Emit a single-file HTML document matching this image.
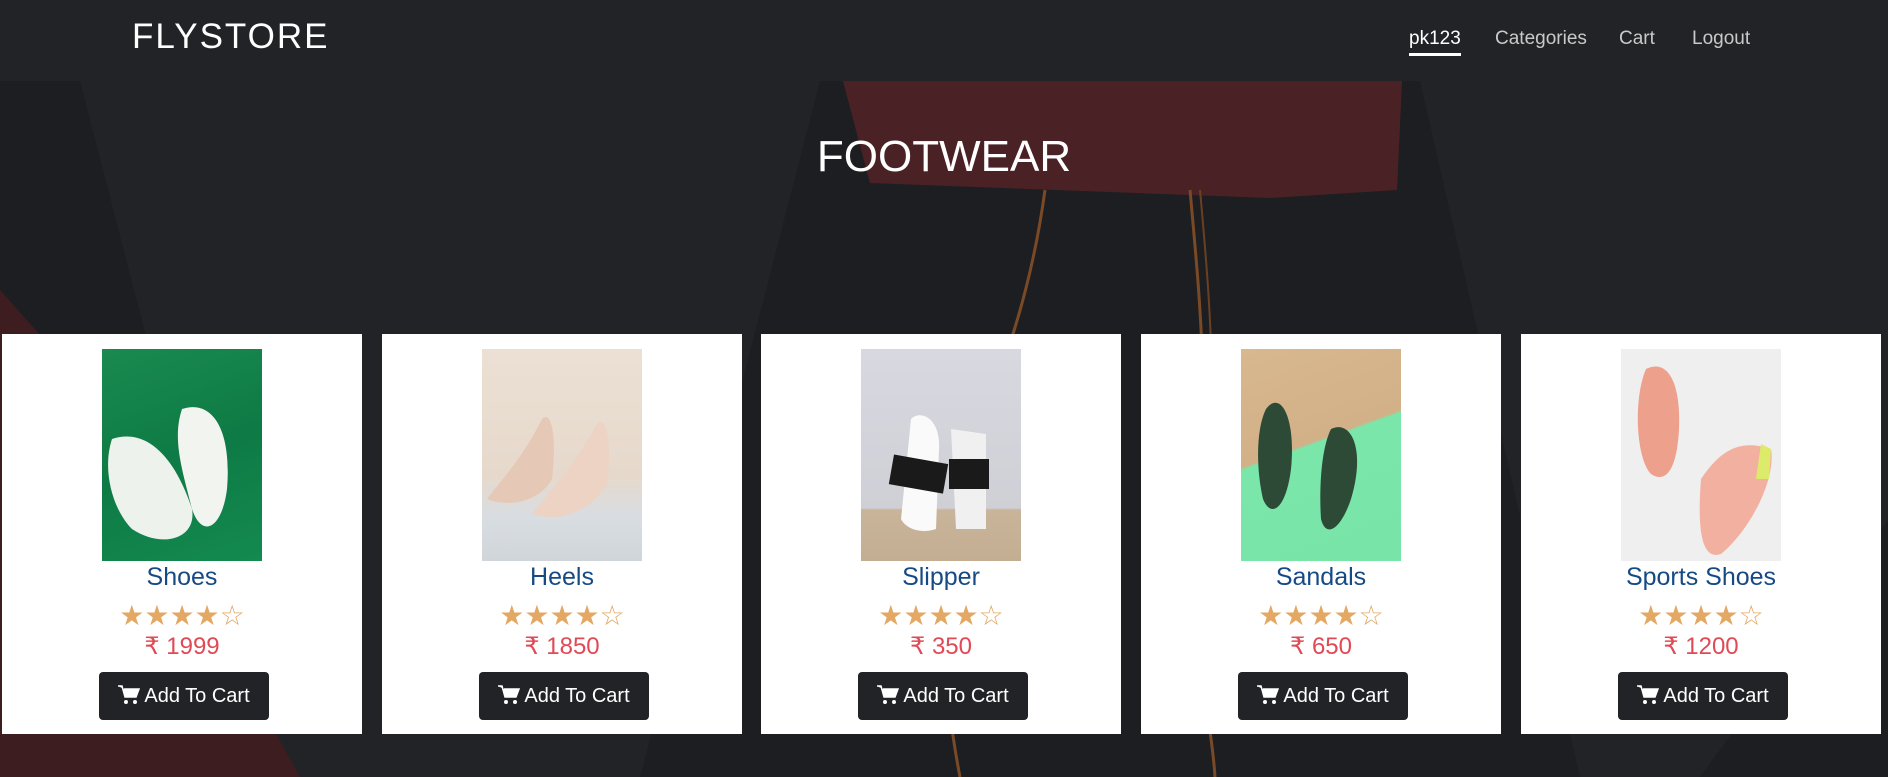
<!DOCTYPE html>
<html><head><meta charset="utf-8"><style>
*{margin:0;padding:0;box-sizing:border-box}
body{width:1888px;height:777px;overflow:hidden;background:#1c1d21;font-family:"Liberation Sans",sans-serif;position:relative}
.bg{position:absolute;left:0;top:0}
nav{position:absolute;left:0;top:0;width:1888px;height:81px;background:#212327}
.brand{position:absolute;left:132px;top:17px;color:#fff;font-size:35px;letter-spacing:2px;font-weight:300}
.nl{position:absolute;top:28px;color:#c9c9c9;font-size:19px}
.nl.act{color:#fff;border-bottom:3px solid #fff;padding-bottom:3px}
h1{position:absolute;left:0;width:1888px;top:132px;text-align:center;color:#fff;font-weight:400;font-size:44px}
.card{position:absolute;top:334px;width:360px;height:400px;background:#fff;text-align:center}
.img{position:absolute;left:100px;top:15px;width:160px;height:212px}
.t{position:absolute;left:0;width:360px;top:229px;font-size:25px;color:#164a85}
.s{position:absolute;left:0;width:360px;top:265px;font-size:28px;color:#e2a864;letter-spacing:0px}
.p{position:absolute;left:0;width:360px;top:298px;font-size:24px;color:#e04a55}
.b{position:absolute;left:97px;top:338px;width:170px;height:48px;background:#212327;border-radius:4px;color:#fff;font-size:20px;line-height:48px}
.b svg{vertical-align:-3px;margin-right:4px}
</style></head><body>
<svg class="bg" width="1888" height="777">
<rect width="1888" height="777" fill="#1d1e22"/>
<polygon points="80,81 820,81 640,777 260,777" fill="#222327"/>
<polygon points="1420,81 1888,81 1888,520 1700,777 1580,777" fill="#222327"/>
<polygon points="0,290 80,380 300,777 0,777" fill="#3e1d20"/>
<polygon points="843,81 1402,81 1397,190 1270,198 870,183" fill="#4a2225"/>
<path d="M1045,190 C1030,300 1000,380 960,470 C930,560 945,700 960,777" stroke="#7a4a26" stroke-width="3" fill="none"/>
<path d="M1190,190 C1200,300 1210,400 1195,500 C1180,600 1210,700 1215,777" stroke="#7a4a26" stroke-width="3" fill="none"/>
<path d="M1200,190 C1210,300 1218,400 1205,500" stroke="#6a4022" stroke-width="2" fill="none"/>
</svg>
<nav><div class="brand">FLYSTORE</div>
<span class="nl act" style="left:1409px">pk123</span>
<span class="nl" style="left:1495px">Categories</span>
<span class="nl" style="left:1619px">Cart</span>
<span class="nl" style="left:1692px">Logout</span></nav>
<h1>FOOTWEAR</h1>

<div class="card" style="left:2px"><div class="img" style="background:linear-gradient(160deg,#1a8a50 0%,#0e7a45 50%,#138a50 100%)"><svg width="160" height="212"><path d="M10,90 C40,80 70,100 90,160 C95,190 60,200 30,180 C10,160 0,120 10,90Z" fill="#eef2ec"/><path d="M80,60 C110,50 130,80 125,140 C120,180 100,190 90,160 C80,120 70,90 80,60Z" fill="#f2f4f0"/></svg></div>
<div class="t">Shoes</div><div class="s">★★★★☆</div><div class="p">₹ 1999</div>
<div class="b"><svg width="22" height="20" viewBox="0 0 22 20"><path d="M0,1h4l3,11h11l3-8H6" fill="#fff" stroke="#fff" stroke-width="1.5"/><circle cx="8" cy="17" r="2" fill="#fff"/><circle cx="17" cy="17" r="2" fill="#fff"/></svg>Add To Cart</div></div>

<div class="card" style="left:382px"><div class="img" style="background:linear-gradient(180deg,#ece0d4 0%,#e6d9cc 60%,#d8dde2 80%,#d0d5da 100%)"><svg width="160" height="212"><path d="M5,150 C20,130 40,110 60,70 C70,60 75,90 70,130 C60,150 30,160 5,150Z" fill="#e5c9b6"/><path d="M50,165 C70,140 90,120 115,75 C125,65 130,95 125,135 C110,160 80,175 50,165Z" fill="#ecd3c3"/></svg></div>
<div class="t">Heels</div><div class="s">★★★★☆</div><div class="p">₹ 1850</div>
<div class="b"><svg width="22" height="20" viewBox="0 0 22 20"><path d="M0,1h4l3,11h11l3-8H6" fill="#fff" stroke="#fff" stroke-width="1.5"/><circle cx="8" cy="17" r="2" fill="#fff"/><circle cx="17" cy="17" r="2" fill="#fff"/></svg>Add To Cart</div></div>

<div class="card" style="left:761px"><div class="img" style="background:linear-gradient(180deg,#d8d8e0 0%,#cfcfd6 75%,#c8b49a 76%,#c4ae92 100%)"><svg width="160" height="212"><path d="M50,70 C60,60 80,70 78,100 L75,180 C60,185 45,180 40,170 Z" fill="#fafafa"/><rect x="30" y="110" width="55" height="30" fill="#1a1a1a" transform="rotate(10 57 125)"/><path d="M90,80 L125,85 L125,180 L95,180Z" fill="#f0f0f0"/><rect x="88" y="110" width="40" height="30" fill="#1a1a1a"/></svg></div>
<div class="t">Slipper</div><div class="s">★★★★☆</div><div class="p">₹ 350</div>
<div class="b"><svg width="22" height="20" viewBox="0 0 22 20"><path d="M0,1h4l3,11h11l3-8H6" fill="#fff" stroke="#fff" stroke-width="1.5"/><circle cx="8" cy="17" r="2" fill="#fff"/><circle cx="17" cy="17" r="2" fill="#fff"/></svg>Add To Cart</div></div>

<div class="card" style="left:1141px"><div class="img" style="background:linear-gradient(160deg,#d8b88e 0%,#d2b088 44%,#7ae6aa 45%,#78e4a8 100%)"><svg width="160" height="212"><path d="M25,60 C40,40 55,70 50,120 C45,160 30,170 22,150 C15,120 15,80 25,60Z" fill="#2c4a36"/><path d="M90,80 C110,70 125,100 110,150 C100,180 85,190 80,170 C78,140 80,100 90,80Z" fill="#2c4a36"/></svg></div>
<div class="t">Sandals</div><div class="s">★★★★☆</div><div class="p">₹ 650</div>
<div class="b"><svg width="22" height="20" viewBox="0 0 22 20"><path d="M0,1h4l3,11h11l3-8H6" fill="#fff" stroke="#fff" stroke-width="1.5"/><circle cx="8" cy="17" r="2" fill="#fff"/><circle cx="17" cy="17" r="2" fill="#fff"/></svg>Add To Cart</div></div>

<div class="card" style="left:1521px"><div class="img" style="background:#efefef"><svg width="160" height="212"><path d="M25,20 C45,10 60,30 58,80 C56,120 45,135 30,125 C15,110 12,50 25,20Z" fill="#eda08c"/><path d="M80,130 C100,100 120,90 150,100 C155,130 130,180 100,205 C85,210 75,195 80,130Z" fill="#f2b0a0"/><path d="M140,95 L150,100 L148,130 L135,130Z" fill="#dcec6a"/></svg></div>
<div class="t">Sports Shoes</div><div class="s">★★★★☆</div><div class="p">₹ 1200</div>
<div class="b"><svg width="22" height="20" viewBox="0 0 22 20"><path d="M0,1h4l3,11h11l3-8H6" fill="#fff" stroke="#fff" stroke-width="1.5"/><circle cx="8" cy="17" r="2" fill="#fff"/><circle cx="17" cy="17" r="2" fill="#fff"/></svg>Add To Cart</div></div>
</body></html>
